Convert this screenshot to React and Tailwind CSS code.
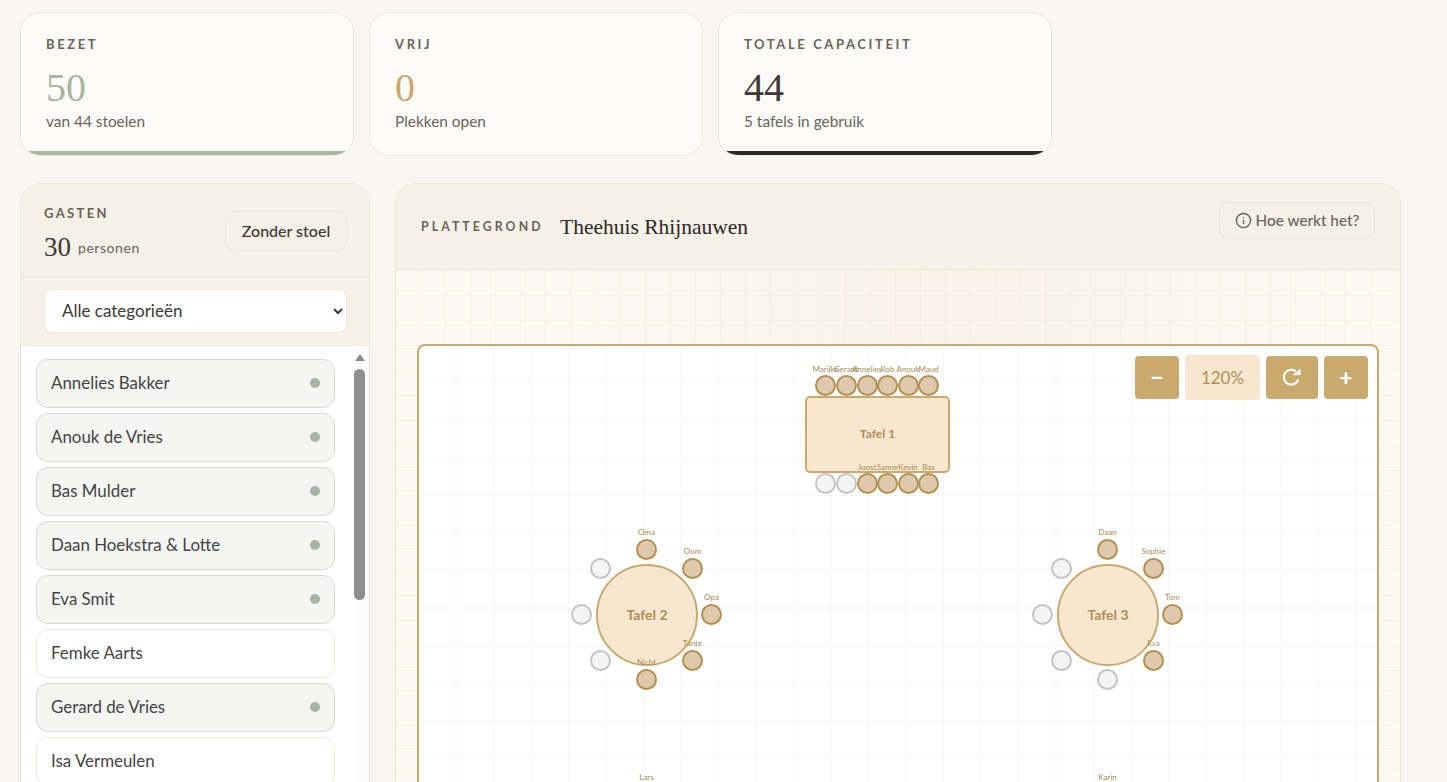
import React from 'react';
import { Info } from 'lucide-react';

const stats = [
  { label: 'BEZET', value: '50', sub: 'van 44 stoelen', color: 'text-[#a8b5a0]', bar: 'bg-[#a8b5a0]' },
  { label: 'VRIJ', value: '0', sub: 'Plekken open', color: 'text-[#c9a96e]', bar: 'bg-transparent' },
  { label: 'TOTALE CAPACITEIT', value: '44', sub: '5 tafels in gebruik', color: 'text-[#3d3935]', bar: 'bg-[#2c2825]' },
];

const gasten = [
  { naam: 'Annelies Bakker', stoel: true },
  { naam: 'Anouk de Vries', stoel: true },
  { naam: 'Bas Mulder', stoel: true },
  { naam: 'Daan Hoekstra & Lotte', stoel: true },
  { naam: 'Eva Smit', stoel: true },
  { naam: 'Femke Aarts', stoel: false },
  { naam: 'Gerard de Vries', stoel: true },
  { naam: 'Isa Vermeulen', stoel: false },
];

// seats in page coordinates, converted to floor coordinates below
const rij = [825.5, 846, 867, 887.5, 908, 928.5];
const rond = [
  [0, -65], [46, -46], [65, 0], [46, 46], [0, 65], [-46, 46], [-65, 0], [-46, -46],
];

const seats = [
  ...['Marijke', 'Gerard', 'Annelies', 'Rob', 'Anouk', 'Maud'].map((n, i) => ({ x: rij[i], y: 385.5, naam: n })),
  ...['', '', 'Joost', 'Sanne', 'Kevin', 'Bas'].map((n, i) => ({ x: rij[i], y: 483.5, naam: n })),
  ...['Oma', 'Oom', 'Opa', 'Tante', 'Nicht', '', '', ''].map((n, i) => ({ x: 646.5 + rond[i][0], y: 614 + rond[i][1], naam: n })),
  ...['Daan', 'Sophie', 'Tom', 'Eva', '', '', '', ''].map((n, i) => ({ x: 1107.5 + rond[i][0], y: 614 + rond[i][1], naam: n })),
  { x: 646.5, y: 794, naam: 'Lars' },
  { x: 1107.5, y: 794, naam: 'Karin' },
];

const FLOOR_X = 419;
const FLOOR_Y = 346;

function Seat({ x, y, naam }) {
  return (
    <>
      <div
        className={`absolute w-[21px] h-[21px] rounded-full border-2 ${naam ? 'bg-[#dfc9ad] border-[#b29150]' : 'bg-[#f4f4f4] border-[#c4c4c4]'}`}
        style={{ left: x - FLOOR_X - 10.5, top: y - FLOOR_Y - 10.5 }}
      />
      {naam && (
        <span
          className="absolute w-[40px] text-center text-[8px] leading-[10px] text-[#a98a55] z-10"
          style={{ left: x - FLOOR_X - 20, top: y - FLOOR_Y - 22 }}
        >
          {naam}
        </span>
      )}
    </>
  );
}

function RondeTafel({ naam, left }) {
  return (
    <div
      className="absolute top-[218px] w-[102px] h-[102px] pb-[2px] rounded-full bg-[#f7e7ce] border-[2.5px] border-[#c9a96e] flex items-center justify-center text-[14px] font-bold text-[#b08d57]"
      style={{ left }}
    >
      {naam}
    </div>
  );
}

export default function App() {
  return (
    <div className="h-screen overflow-hidden bg-[#faf7f2] px-5 pt-3 font-['Lato','Noto_Sans',sans-serif] text-[#2c2825]">
      {/* STATS */}
      <div className="grid grid-cols-[334px_334px_334px] gap-[15px]">
        {stats.map((s) => (
          <div
            key={s.label}
            className="relative h-[144px] overflow-hidden rounded-[20px] border border-[#efe7d8] bg-[#fdfbf8] pl-[25px] pt-[24px]"
          >
            <div className="text-[13px] leading-[14px] font-bold tracking-[0.2em] text-[#6b6358]">{s.label}</div>
            <div className={`mt-[14px] font-['Liberation_Serif',serif] text-[40px] leading-[46px] ${s.color}`}>{s.value}</div>
            <div className="text-[15.4px] leading-[20px] text-[#6b6358]">{s.sub}</div>
            <div className={`absolute bottom-0 left-0 right-0 h-1 ${s.bar}`} />
          </div>
        ))}
      </div>

      <div className="mt-[27px] flex gap-[25px] w-[1381px]">
        {/* GASTEN */}
        <aside className="w-[350px] h-[620px] shrink-0 overflow-hidden rounded-[20px] border border-[#efe7d8] bg-white">
          <div className="h-[93px] flex items-start justify-between bg-[#f5f0e8] border-b border-[#efe7d8] pl-[23px] pr-[22px] pt-[22px]">
            <div>
              <div className="text-[13px] leading-[14px] font-bold tracking-[0.18em] text-[#6b6358]">GASTEN</div>
              <div className="mt-[11px] flex items-center gap-[7px]">
                <span className="font-['Liberation_Serif',serif] text-[27px] leading-[32px] text-[#3d3935]">30</span>
                <span className="text-[14px] tracking-[0.04em] text-[#6b6358]">personen</span>
              </div>
            </div>
            <button className="mt-[5px] h-10 w-[122px] rounded-[10px] border border-[#efe7d8] bg-[#f5f0e8] text-[16px] font-medium text-[#3d3935]">
              Zonder stoel
            </button>
          </div>
          <div className="h-[69px] flex items-center justify-end bg-[#f5f0e8] border-b border-[#efe7d8] pr-[22px]">
            <select className="w-[303px] h-[44px] rounded-[8px] border border-[#efe7d8] bg-white pl-[13px] pb-[2px] text-[17px] text-[#3d3935]">
              <option>Alle categorieën</option>
            </select>
          </div>
          <div className="flex">
            <div className="w-[333px] bg-white pl-[15px] pt-[13px] flex flex-col gap-[5px]">
              {gasten.map((g) => (
                <div
                  key={g.naam}
                  className={`w-[299px] h-[49px] shrink-0 rounded-[12px] border pl-[14px] pr-[14px] pb-[2px] flex items-center justify-between text-[16.9px] text-[#444] ${g.stoel ? 'bg-[#f5f5f3] border-[#d8d8d2]' : 'bg-white border-[#efe7d8]'}`}
                >
                  <span>{g.naam}</span>
                  {g.stoel && <span className="w-[10px] h-[10px] rounded-full bg-[#a8b5a0]" />}
                </div>
              ))}
            </div>
            <div className="flex-1 bg-[#fbfbfb] flex flex-col items-center pt-[8px] pr-[4px]">
              <div className="w-0 h-0 border-x-[5px] border-x-transparent border-b-[7px] border-b-[#8f8f8f]" />
              <div className="mt-[8px] w-[11px] h-[231px] rounded-full bg-[#8f8f8f]" />
            </div>
          </div>
        </aside>

        {/* PLATTEGROND */}
        <main className="flex-1 h-[620px] overflow-hidden rounded-[20px] border border-[#efe7d8] bg-[#fdfaf5]">
          <div className="h-[86px] flex justify-between bg-[#f5f0e8] border-b border-[#efe7d8] pl-[25px] pr-[25px]">
            <div className="flex items-center h-[86px]">
              <span className="w-[139px] text-[12.3px] font-bold tracking-[0.25em] text-[#6b6358]">PLATTEGROND</span>
              <span className="font-['Liberation_Serif',serif] text-[21.5px] text-[#2c2825]">Theehuis Rhijnauwen</span>
            </div>
            <button className="mt-[18px] h-[37px] w-[156px] rounded-[10px] border border-[#ebe4d6] bg-[#f5f0e8] flex items-center justify-center gap-[4px] text-[15.3px] font-medium text-[#6b6358]">
              <Info size={17} strokeWidth={2} />
              Hoe werkt het?
            </button>
          </div>
          <div className="h-[534px] px-[21px] pt-[74px] bg-[linear-gradient(rgba(180,160,120,0.07)_1px,transparent_1px),linear-gradient(90deg,rgba(180,160,120,0.07)_1px,transparent_1px),radial-gradient(ellipse_at_55%_0%,#fbf3ea,#fcf9f3_55%)] bg-[size:25px_25px,25px_25px,100%_100%] bg-[position:0_0,-1px_0,0_0]">
            <div className="relative h-[600px] rounded-[8px] border-2 border-[#c9a96e] bg-white bg-[linear-gradient(#f5f5f5_1px,transparent_1px),linear-gradient(90deg,#f5f5f5_1px,transparent_1px)] bg-[size:37.5px_37.5px] bg-[position:-1px_-1px] overflow-hidden">
              {/* zoom knoppen */}
              <div className="absolute top-[9px] right-[9px] flex items-center gap-[6px] z-20">
                <button className="w-[44px] h-[43px] rounded-[4px] bg-[#c9a96e] text-white text-[22px] font-black">−</button>
                <div className="w-[75px] h-[45px] rounded-[4px] bg-[#f7e7ce] flex items-center justify-center text-[17px] text-[#b08d57]">120%</div>
                <button className="w-[52px] h-[43px] rounded-[4px] bg-[#c9a96e] flex items-center justify-center">
                  <svg width="20" height="19" viewBox="0 0 20 19" fill="none" className="text-white">
                    <path d="M15.8 12.5A7.4 7.4 0 1 1 13 2.8" stroke="currentColor" strokeWidth="2.2" strokeLinecap="round" />
                    <path d="M10.5 7.2 L19 7 L18.2 0.8 Z" fill="currentColor" />
                  </svg>
                </button>
                <button className="w-[44px] h-[43px] rounded-[4px] bg-[#c9a96e] text-white text-[22px] font-black">+</button>
              </div>

              <div className="absolute left-[386px] top-[50px] w-[145px] h-[77px] pb-[2px] rounded-[5px] bg-[#f7e7ce] border-[2.5px] border-[#c9a96e] flex items-center justify-center text-[12px] font-bold text-[#b08d57]">
                Tafel 1
              </div>
              <RondeTafel naam="Tafel 2" left={177} />
              <RondeTafel naam="Tafel 3" left={638} />
              {seats.map((s, i) => (
                <Seat key={i} {...s} />
              ))}
            </div>
          </div>
        </main>
      </div>
    </div>
  );
}
